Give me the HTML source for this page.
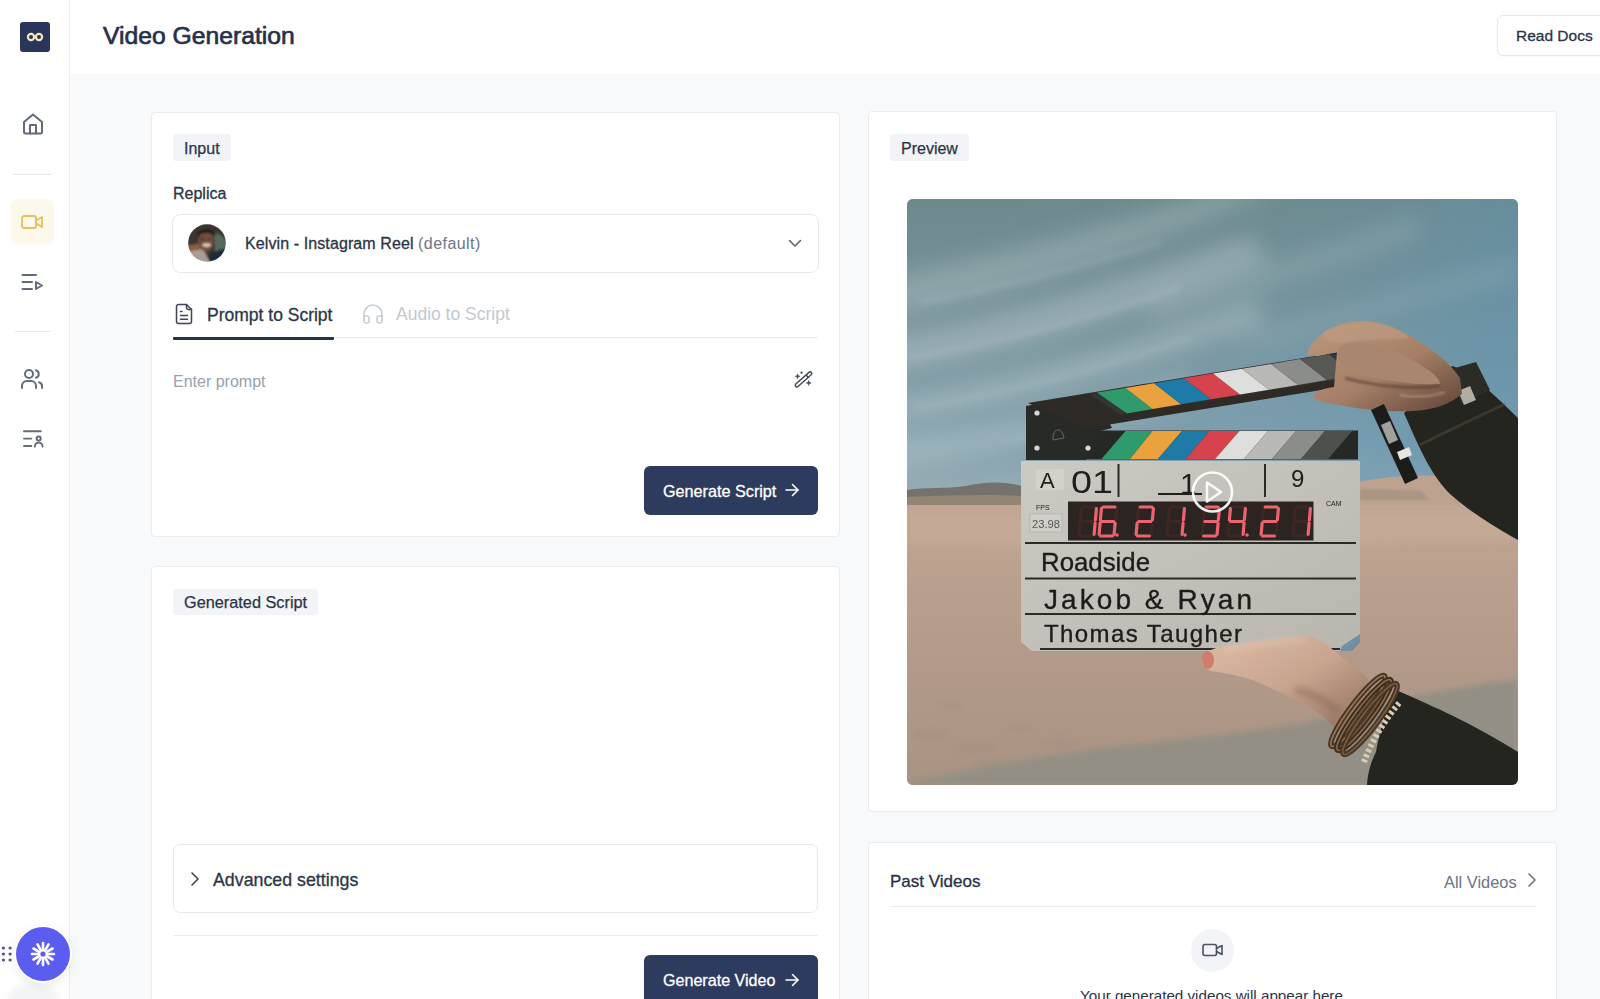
<!DOCTYPE html>
<html><head><meta charset="utf-8">
<style>
*{box-sizing:border-box;margin:0;padding:0}
html,body{width:1600px;height:999px;overflow:hidden;background:#f8f9fb;font-family:"Liberation Sans",sans-serif;color:#273247}
.abs{position:absolute}
svg{position:absolute;overflow:visible}
#side{position:absolute;left:0;top:0;width:70px;height:999px;background:#fff;border-right:1px solid #eceef2}
#hdr{position:absolute;left:70px;top:0;width:1530px;height:74px;background:#fff}
.card{position:absolute;background:#fff;border:1px solid #e9ecf0;border-radius:4px}
.badge{position:absolute;-webkit-text-stroke:0.25px currentColor;background:#f2f4f7;border-radius:3px;font-size:16px;color:#2b3447;height:26px;line-height:27.5px;padding:0 11px;white-space:nowrap}
.txt{position:absolute;white-space:nowrap;line-height:1}
.md{-webkit-text-stroke:0.3px currentColor}
.btn{position:absolute;background:#2d3b5e;border-radius:6px}
.ico{fill:none;stroke-linecap:round;stroke-linejoin:round}
</style></head><body>
<div id="side">
  <div class="abs" style="left:20px;top:22px;width:30px;height:30px;background:#2a355c;border-radius:3px"></div>
  <svg style="left:20px;top:22px" width="30" height="30" viewBox="0 0 30 30">
    <circle cx="11" cy="15" r="3.1" fill="#3a3520" stroke="#ece8c8" stroke-width="2.2"/>
    <circle cx="19" cy="15" r="3.1" fill="#3a3520" stroke="#ece8c8" stroke-width="2.2"/>
  </svg>
  <!-- home -->
  <svg class="ico" style="left:21px;top:112px" width="24" height="24" viewBox="0 0 24 24" stroke="#646b78" stroke-width="2">
    <path d="M3 10 L12 2.5 L21 10 V20 a1.5 1.5 0 0 1 -1.5 1.5 H4.5 A1.5 1.5 0 0 1 3 20 Z"/>
    <path d="M9 21.5 V13 h6 v8.5"/>
  </svg>
  <div class="abs" style="left:13px;top:174px;width:39px;height:1px;background:#e6e8ec"></div>
  <!-- active video -->
  <div class="abs" style="left:11px;top:199px;width:43px;height:45px;background:#fdf8ec;border-radius:6px"></div>
  <svg class="ico" style="left:20px;top:210px" width="24" height="24" viewBox="0 0 24 24" stroke="#e0c45a" stroke-width="1.8">
    <rect x="2" y="6" width="14" height="12" rx="2"/>
    <path d="M16 10.5 L22 7 V17 L16 13.5"/>
  </svg>
  <!-- list video -->
  <svg class="ico" style="left:20px;top:270px" width="24" height="24" viewBox="0 0 24 24" stroke="#646b78" stroke-width="2">
    <path d="M2.5 5 H16"/><path d="M2.5 12 H12"/><path d="M2.5 19 H12"/><path d="M16 12 L22 15.5 L16 19 Z"/>
  </svg>
  <div class="abs" style="left:15px;top:331px;width:36px;height:1px;background:#e6e8ec"></div>
  <!-- users -->
  <svg class="ico" style="left:20px;top:367px" width="24" height="24" viewBox="0 0 24 24" stroke="#646b78" stroke-width="2">
    <circle cx="9" cy="7" r="4"/><path d="M2 21 v-2 a5 5 0 0 1 5 -5 h4 a5 5 0 0 1 5 5 v2"/><path d="M16 3.2 a4 4 0 0 1 0 7.6"/><path d="M22 21 v-2 a4 4 0 0 0 -3 -3.8"/>
  </svg>
  <!-- list user -->
  <svg class="ico" style="left:21px;top:427px" width="24" height="24" viewBox="0 0 24 24" stroke="#646b78" stroke-width="1.9">
    <path d="M3 4.2 H19.8"/><path d="M3 11.6 H10.3"/><path d="M3 19 H10.3"/><circle cx="17.7" cy="11.6" r="2.1"/><path d="M13.8 19.6 C14 16.6 15 15.6 17.7 15.6 C20.4 15.6 21.4 16.6 21.6 19.6"/>
  </svg>
  <!-- bottom widget -->
  <div class="abs" style="left:8px;top:983px;width:50px;height:30px;border-radius:50%;background:#f3f4f6;filter:blur(3px)"></div>
  <div class="abs" style="left:14px;top:925px;width:58px;height:58px;border-radius:50%;background:#fff;box-shadow:0 3px 10px rgba(0,0,0,0.08)"></div>
  <div class="abs" style="left:16px;top:927px;width:54px;height:54px;border-radius:50%;background:#5b5cf0"></div>
  <svg style="left:16px;top:927px" width="54" height="54" viewBox="0 0 54 54">
    <g stroke="#fff" stroke-width="2.6" stroke-linecap="round" transform="translate(27 27)">
      <path d="M0 -4.5 V-11"/><path d="M0 4.5 V11"/><path d="M-4.5 0 H-11"/><path d="M4.5 0 H11"/>
      <g transform="rotate(30)"><path d="M0 -4.5 V-11"/><path d="M0 4.5 V11"/><path d="M-4.5 0 H-11"/><path d="M4.5 0 H11"/></g>
      <g transform="rotate(60)"><path d="M0 -4.5 V-11"/><path d="M0 4.5 V11"/><path d="M-4.5 0 H-11"/><path d="M4.5 0 H11"/></g>
    </g>
    <circle cx="27" cy="27" r="4.2" fill="#fff"/><circle cx="27" cy="27" r="2.6" fill="#5b5cf0"/>
  </svg>
  <svg style="left:0px;top:944px" width="14" height="20" viewBox="0 0 14 20">
    <g fill="#4b4fa8"><circle cx="3.4" cy="4" r="1.6"/><circle cx="10.1" cy="4" r="1.6"/><circle cx="3.4" cy="10" r="1.6"/><circle cx="10.1" cy="10" r="1.6"/><circle cx="3.4" cy="16" r="1.6"/><circle cx="10.1" cy="16" r="1.6"/></g>
  </svg>
</div>
<div id="hdr">
  <div class="txt" style="left:33px;top:24.3px;font-size:24.7px;color:#27304a;-webkit-text-stroke:0.7px #27304a">Video Generation</div>
  <div class="abs" style="left:1427px;top:15px;width:130px;height:41px;border:1px solid #e6e9ee;border-radius:6px;background:#fff;box-shadow:0 1px 2px rgba(0,0,0,0.03)"></div>
  <div class="txt md" style="left:1446px;top:28px;font-size:15.5px;color:#2b3447">Read Docs</div>
</div>

<!-- INPUT CARD -->
<div class="card" style="left:151px;top:112px;width:689px;height:425px"></div>
<div class="badge" style="left:173px;top:134px;height:27px;line-height:29px">Input</div>
<div class="txt md" style="left:173px;top:186px;font-size:16px;color:#2b3447">Replica</div>
<div class="abs" style="left:172px;top:214px;width:647px;height:59px;border:1px solid #e6e9ee;border-radius:8px;background:#fff"></div>
<svg style="left:188px;top:224px" width="38" height="38" viewBox="0 0 38 38">
  <defs><clipPath id="av"><circle cx="19" cy="19" r="18.8"/></clipPath><filter id="avb"><feGaussianBlur stdDeviation="0.9"/></filter></defs>
  <g clip-path="url(#av)"><g filter="url(#avb)">
    <rect x="-2" y="-2" width="42" height="42" fill="#3a3430"/>
    <path d="M26 8 C33 10 40 16 40 24 L40 28 L27 28 Z" fill="#56695c"/>
    <path d="M-2 22 L14 19 L15 26 L-2 30 Z" fill="#8c5c42"/>
    <path d="M-2 28 L15 25 C18 30 20 34 22 40 L-2 40 Z" fill="#aa9d98"/>
    <path d="M21 31 C26 27 34 25 40 24 L40 40 L22 40 Z" fill="#1d2a3a"/>
    <ellipse cx="18" cy="17.5" rx="7.5" ry="10" fill="#76503e"/>
    <path d="M9 12 C9 4 28 3 28 12 C25 8 13 8 9 12 Z" fill="#241c18"/>
    <ellipse cx="18.5" cy="21" rx="4.2" ry="1.8" fill="#e2d2c8"/>
    <path d="M13 15 h3 M20 15 h3" stroke="#2a1c16" stroke-width="1.4"/>
  </g></g>
</svg>
<div class="txt" style="left:245px;top:236.4px;font-size:16px;color:#2b3447"><span class="md" style="letter-spacing:0.1px">Kelvin - Instagram Reel</span> <span style="color:#6e7686;letter-spacing:0.45px">(default)</span></div>
<svg class="ico" style="left:786px;top:234px" width="18" height="18" viewBox="0 0 18 18" stroke="#575d68" stroke-width="1.5">
  <path d="M3.5 6.5 L9 12 L14.5 6.5"/>
</svg>
<!-- tabs -->
<svg class="ico" style="left:173px;top:302px" width="22" height="24" viewBox="0 0 22 24" stroke="#3d4556" stroke-width="1.5">
  <path d="M13.5 2.5 H5.5 a2 2 0 0 0 -2 2 V19.5 a2 2 0 0 0 2 2 H16.5 a2 2 0 0 0 2 -2 V7.5 Z"/>
  <path d="M13.5 2.5 V5.5 a2 2 0 0 0 2 2 H18.5"/><path d="M7.5 9.5 H9"/><path d="M7.5 13.5 H14.5"/><path d="M7.5 17.2 H14.5"/>
</svg>
<div class="txt md" style="left:207px;top:307px;font-size:17.5px;color:#2c3548">Prompt to Script</div>
<svg class="ico" style="left:361px;top:302px" width="24" height="24" viewBox="0 0 24 24" stroke="#c9ced6" stroke-width="1.6">
  <path d="M3 18 V12 a9 9 0 0 1 18 0 V18"/>
  <path d="M21 19 a2 2 0 0 1 -2 2 h-1 a2 2 0 0 1 -2 -2 v-3 a2 2 0 0 1 2 -2 h3 Z"/>
  <path d="M3 19 a2 2 0 0 0 2 2 h1 a2 2 0 0 0 2 -2 v-3 a2 2 0 0 0 -2 -2 H3 Z"/>
</svg>
<div class="txt" style="left:396px;top:306px;font-size:17.5px;color:#c3c8d0">Audio to Script</div>
<div class="abs" style="left:173px;top:337px;width:645px;height:1px;background:#e8ebef"></div>
<div class="abs" style="left:173px;top:337px;width:161px;height:3px;background:#27304a;border-radius:1px"></div>
<div class="txt" style="left:173px;top:374px;font-size:16px;color:#9aa1ad">Enter prompt</div>
<svg style="left:792px;top:368px" width="22" height="22" viewBox="0 0 22 22">
  <path d="M4.9 17.2 L18.1 5.6" stroke="#3f4654" stroke-width="4.7" stroke-linecap="round"/>
  <path d="M4.9 17.2 L18.1 5.6" stroke="#fff" stroke-width="1.9" stroke-linecap="round"/>
  <path d="M14.3 7.2 L16.6 9.8" stroke="#3f4654" stroke-width="1.5"/>
  <path d="M5.6 5.9 Q5.6 8.3 8.0 8.3 Q5.6 8.3 5.6 10.700000000000001 Q5.6 8.3 3.1999999999999997 8.3 Q5.6 8.3 5.6 5.9 Z M16.7 12.6 Q16.7 15 19.099999999999998 15 Q16.7 15 16.7 17.4 Q16.7 15 14.299999999999999 15 Q16.7 15 16.7 12.6 Z" fill="#3f4654" stroke="#3f4654" stroke-width="0.6" stroke-linejoin="round"/>
  <circle cx="9.5" cy="4.7" r="1.1" fill="#3f4654"/>
</svg>
<div class="btn" style="left:644px;top:466px;width:174px;height:49px"></div>
<div class="txt md" style="left:663px;top:483px;font-size:16.2px;color:#fff">Generate Script</div>
<svg class="ico" style="left:783px;top:481px" width="18" height="18" viewBox="0 0 18 18" stroke="#fff" stroke-width="1.6">
  <path d="M3 9 H15"/><path d="M9.5 3.5 L15 9 L9.5 14.5"/>
</svg>

<!-- GENERATED SCRIPT CARD -->
<div class="card" style="left:151px;top:566px;width:689px;height:470px"></div>
<div class="badge" style="left:173px;top:589px;font-size:16.3px">Generated Script</div>
<div class="abs" style="left:173px;top:844px;width:645px;height:69px;border:1px solid #e6e9ee;border-radius:7px;background:#fff"></div>
<svg class="ico" style="left:186px;top:870px" width="18" height="18" viewBox="0 0 18 18" stroke="#3d4556" stroke-width="1.6">
  <path d="M6 3 L12 9 L6 15"/>
</svg>
<div class="txt md" style="left:213px;top:872px;font-size:17.8px;color:#2c3548">Advanced settings</div>
<div class="abs" style="left:173px;top:935px;width:645px;height:1px;background:#e8ebef"></div>
<div class="btn" style="left:644px;top:955px;width:174px;height:60px"></div>
<div class="txt md" style="left:663px;top:972.4px;font-size:16.1px;color:#fff">Generate Video</div>
<svg class="ico" style="left:783px;top:971px" width="18" height="18" viewBox="0 0 18 18" stroke="#fff" stroke-width="1.6">
  <path d="M3 9 H15"/><path d="M9.5 3.5 L15 9 L9.5 14.5"/>
</svg>

<!-- PREVIEW CARD -->
<div class="card" style="left:868px;top:111px;width:689px;height:701px"></div>
<div class="badge" style="left:890px;top:134px;height:27px;line-height:29.5px">Preview</div>
<div id="photo" class="abs" style="left:907px;top:199px;width:611px;height:586px;border-radius:6px;overflow:hidden;background:#8aa6b8">
<svg width="611" height="586" viewBox="907 199 611 586" style="left:0;top:0;position:absolute">
<defs>
  <linearGradient id="sky" x1="0" y1="0" x2="0" y2="1">
    <stop offset="0" stop-color="#6d898c"/>
    <stop offset="0.4" stop-color="#7a959c"/>
    <stop offset="0.75" stop-color="#83a0ad"/>
    <stop offset="1" stop-color="#a2b4b8"/>
  </linearGradient>
  <linearGradient id="skyR" x1="0" y1="0" x2="1" y2="0.3">
    <stop offset="0" stop-color="#8fb0c0" stop-opacity="0"/>
    <stop offset="0.5" stop-color="#6a9ab5" stop-opacity="0.05"/>
    <stop offset="1" stop-color="#5a92b2" stop-opacity="0.45"/>
  </linearGradient>
  <linearGradient id="sand" x1="0" y1="0" x2="0" y2="1">
    <stop offset="0" stop-color="#c1a593"/>
    <stop offset="0.45" stop-color="#b59c8b"/>
    <stop offset="1" stop-color="#a99383"/>
  </linearGradient>
  <linearGradient id="slate" x1="0" y1="0" x2="1" y2="1">
    <stop offset="0" stop-color="#cbcac3"/>
    <stop offset="1" stop-color="#b9b6ae"/>
  </linearGradient>
  <linearGradient id="skin1" x1="0" y1="0" x2="1" y2="1">
    <stop offset="0" stop-color="#c09a7e"/>
    <stop offset="0.55" stop-color="#a47e66"/>
    <stop offset="1" stop-color="#5e4436"/>
  </linearGradient>
  <linearGradient id="skin2" x1="0" y1="0" x2="1" y2="1">
    <stop offset="0" stop-color="#dcbca8"/>
    <stop offset="0.5" stop-color="#c9a58e"/>
    <stop offset="1" stop-color="#8a6a58"/>
  </linearGradient>
  <filter id="bl6" x="-50%" y="-50%" width="200%" height="200%"><feGaussianBlur stdDeviation="5"/></filter>
  <filter id="bl12" x="-50%" y="-50%" width="200%" height="200%"><feGaussianBlur stdDeviation="11"/></filter>
  <filter id="bl3" x="-50%" y="-50%" width="200%" height="200%"><feGaussianBlur stdDeviation="3"/></filter>
  <filter id="bl1" x="-20%" y="-20%" width="140%" height="140%"><feGaussianBlur stdDeviation="1"/></filter>
</defs>
<!-- sky -->
<rect x="907" y="199" width="611" height="320" fill="url(#sky)"/>
<rect x="907" y="199" width="611" height="320" fill="url(#skyR)"/>
<g fill="#c4d0d2" filter="url(#bl12)">
  <path d="M880 280 C1000 255 1100 230 1220 190 L1280 190 C1150 245 1030 285 880 320 Z" opacity="0.3"/>
  <path d="M880 340 C1010 318 1120 282 1250 235 L1270 262 C1140 310 1020 350 880 375 Z" opacity="0.38"/>
  <path d="M880 400 C1010 380 1120 348 1260 298 L1260 325 C1120 372 1010 405 880 425 Z" opacity="0.38"/>
  <path d="M880 440 C1000 428 1090 408 1190 375 L1190 400 C1090 428 1000 452 880 470 Z" opacity="0.4"/>
  <path d="M1150 300 C1230 280 1320 250 1420 215 L1420 235 C1320 270 1230 300 1150 322 Z" opacity="0.22"/>
  <path d="M1240 335 C1330 315 1400 292 1520 258 L1520 276 C1400 308 1330 330 1240 350 Z" opacity="0.18"/>
</g>
<g fill="#d0dadb" filter="url(#bl3)">
  <path d="M920 300 C1000 285 1080 265 1160 240 L1162 244 C1080 270 1000 290 920 305 Z" opacity="0.18"/>
  <path d="M910 355 C990 342 1080 318 1180 285 L1182 290 C1080 324 990 348 910 361 Z" opacity="0.18"/>
  <path d="M915 405 C1000 392 1090 370 1190 335 L1192 340 C1090 376 1000 398 915 411 Z" opacity="0.15"/>
  <path d="M1000 440 C1050 432 1100 420 1150 402 L1152 407 C1100 425 1050 437 1000 446 Z" opacity="0.15"/>
</g>
<!-- mountains -->
<path d="M907 490 C925 487 945 489 965 486 C985 482 1000 481 1022 486 L1022 510 L907 510 Z" fill="#75726e"/>
<path d="M907 497 C950 495 990 494 1022 496 L1022 510 L907 510 Z" fill="#938474"/>
<!-- sand -->
<rect x="907" y="505" width="611" height="280" fill="url(#sand)"/>
<path d="M907 512 H1518 V540 C1300 545 1100 548 907 545 Z" fill="#c9af9c" opacity="0.5" filter="url(#bl6)"/>
<g fill="#9e8e80" opacity="0.35" filter="url(#bl3)">
  <ellipse cx="930" cy="735" rx="18" ry="6"/><ellipse cx="975" cy="748" rx="22" ry="5"/><ellipse cx="1020" cy="728" rx="15" ry="4"/>
  <ellipse cx="950" cy="705" rx="12" ry="4"/><ellipse cx="1060" cy="742" rx="20" ry="5"/><ellipse cx="1000" cy="765" rx="25" ry="6"/>
</g>
<path d="M1358 482 C1380 478 1410 474 1445 476 L1470 505 L1358 505 Z" fill="#bda290"/>
<path d="M1360 490 C1380 487 1400 492 1420 490 L1430 500 L1360 500 Z" fill="#a49080" opacity="0.7" filter="url(#bl1)"/>
<path d="M907 782 C980 768 1060 752 1140 744 C1200 738 1240 732 1300 724 C1380 704 1450 686 1518 680 L1518 785 L907 785 Z" fill="#938f85" filter="url(#bl3)"/>
<!-- ===== clapperboard ===== -->
<path d="M1021 461 H1360 V640 L1350 651 H1032 L1021 642 Z" fill="url(#slate)"/>
<path d="M1342 646 L1360 634 V642 L1352 651 H1340 Z" fill="#5f84a0" opacity="0.8"/>
<rect x="1026" y="430.5" width="332" height="29" fill="#262826"/>
<g>
  <path d="M1101.5 459 L1125.5 431 H1152.5 L1130 459 Z" fill="#2f9a6c"/>
  <path d="M1130 459 L1152.5 431 H1182 L1158 459 Z" fill="#e9a23e"/>
  <path d="M1158 459 L1182 431 H1209.5 L1185.5 459 Z" fill="#1e7aa6"/>
  <path d="M1185.5 459 L1209.5 431 H1239.5 L1215 459 Z" fill="#d6434c"/>
  <path d="M1215 459 L1239.5 431 H1268 L1244 459 Z" fill="#dedfdc"/>
  <path d="M1244 459 L1268 431 H1296 L1272 459 Z" fill="#b9bab6"/>
  <path d="M1272 459 L1296 431 H1325 L1301 459 Z" fill="#8b8d8a"/>
  <path d="M1301 459 L1325 431 H1352 L1328 459 Z" fill="#4e504e"/>
</g>
<path d="M1026 406 L1094 393 L1112 428 L1100 431 L1086 460 H1026 Z" fill="#282a28"/>
<circle cx="1037" cy="413" r="2.6" fill="#d8d8d8"/><circle cx="1037" cy="448" r="2.6" fill="#d8d8d8"/><circle cx="1088" cy="448" r="2.6" fill="#d8d8d8"/>
<path d="M1053 440 C1052 428 1062 426 1064 438 Z" fill="none" stroke="#777" stroke-width="0.8"/>
<!-- top stick -->
<path d="M1028 403 L1352 350 L1352 385 L1085 428.5 Z" fill="#2e2b26"/>
<path d="M1090 394.5 L1352 351 L1352 377 L1120 414.5 Z" fill="#353533"/>
<g>
  <path d="M1097 392.5 L1125.5 388 L1152.5 409 L1127 413.5 Z" fill="#2f9a6c"/>
  <path d="M1125.5 388 L1154 383.3 L1181 404.3 L1152.5 409 Z" fill="#e9a23e"/>
  <path d="M1154 383.3 L1184 378.3 L1211 399.3 L1181 404.3 Z" fill="#1e7aa6"/>
  <path d="M1184 378.3 L1213 373.5 L1240 394.5 L1211 399.3 Z" fill="#d6434c"/>
  <path d="M1213 373.5 L1242 368.7 L1269 389.7 L1240 394.5 Z" fill="#dedfdc"/>
  <path d="M1242 368.7 L1271 363.9 L1298 384.9 L1269 389.7 Z" fill="#b9bab6"/>
  <path d="M1271 363.9 L1300 359.1 L1327 380.1 L1298 384.9 Z" fill="#8b8d8a"/>
  <path d="M1300 359.1 L1329 354.3 L1352 373.5 L1352 376 L1327 380.1 Z" fill="#575856"/>
</g>
<!-- display -->
<rect x="1068" y="501.5" width="245.5" height="39" fill="#2b2421"/>
<g stroke-width="3.2" fill="none" stroke-linecap="round">
<path d="M1083.1 507.0 L1094.9 507.0 M1080.6 536.0 L1092.4 536.0 M1080.1 523.1 L1079.1 534.4 M1081.4 508.6 L1080.4 519.9 M1081.8 521.5 L1093.7 521.5 M1116.4 508.6 L1115.4 519.9 M1152.1 523.1 L1151.1 534.4 M1138.4 508.6 L1137.4 519.9 M1171.1 507.0 L1182.9 507.0 M1168.6 536.0 L1180.4 536.0 M1168.1 523.1 L1167.1 534.4 M1169.4 508.6 L1168.4 519.9 M1169.8 521.5 L1181.7 521.5 M1203.1 523.1 L1202.1 534.4 M1204.4 508.6 L1203.4 519.9 M1232.1 507.0 L1243.9 507.0 M1229.6 536.0 L1241.4 536.0 M1229.1 523.1 L1228.1 534.4 M1277.1 523.1 L1276.1 534.4 M1263.4 508.6 L1262.4 519.9 M1297.1 507.0 L1308.9 507.0 M1294.6 536.0 L1306.4 536.0 M1294.1 523.1 L1293.1 534.4 M1295.4 508.6 L1294.4 519.9 M1295.8 521.5 L1307.7 521.5" stroke="#4a2a28" opacity="0.6"/>
<path d="M1096.4 508.6 L1095.4 519.9 M1095.1 523.1 L1094.1 534.4 M1103.1 507.0 L1114.9 507.0 M1115.1 523.1 L1114.1 534.4 M1100.6 536.0 L1112.4 536.0 M1100.1 523.1 L1099.1 534.4 M1101.4 508.6 L1100.4 519.9 M1101.8 521.5 L1113.7 521.5 M1140.1 507.0 L1151.9 507.0 M1153.4 508.6 L1152.4 519.9 M1137.6 536.0 L1149.4 536.0 M1137.1 523.1 L1136.1 534.4 M1138.8 521.5 L1150.7 521.5 M1184.4 508.6 L1183.4 519.9 M1183.1 523.1 L1182.1 534.4 M1206.1 507.0 L1217.9 507.0 M1219.4 508.6 L1218.4 519.9 M1218.1 523.1 L1217.1 534.4 M1203.6 536.0 L1215.4 536.0 M1204.8 521.5 L1216.7 521.5 M1245.4 508.6 L1244.4 519.9 M1244.1 523.1 L1243.1 534.4 M1230.4 508.6 L1229.4 519.9 M1230.8 521.5 L1242.7 521.5 M1265.1 507.0 L1276.9 507.0 M1278.4 508.6 L1277.4 519.9 M1262.6 536.0 L1274.4 536.0 M1262.1 523.1 L1261.1 534.4 M1263.8 521.5 L1275.7 521.5 M1310.4 508.6 L1309.4 519.9 M1309.1 523.1 L1308.1 534.4" stroke="#ec6470"/>
</g>
<circle cx="1117" cy="535" r="1.8" fill="#ec6470"/><circle cx="1185" cy="535" r="1.8" fill="#ec6470"/><circle cx="1247" cy="535" r="1.8" fill="#ec6470"/>

<g stroke="#2a2a28" stroke-width="2">
  <path d="M1025 543 H1356"/><path d="M1025 578.5 H1356"/><path d="M1025 614 H1356"/><path d="M1040 649 H1340"/>
  <path d="M1118.5 464 V497"/><path d="M1265 464 V497"/>
</g>
<rect x="1036" y="469" width="28" height="21" fill="#d2d1ca"/>
<rect x="1030" y="514" width="32" height="18" fill="#d0cfc8" stroke="#aaa" stroke-width="0.6"/>
<g font-family="Liberation Sans" fill="#1f1f1d">
  <text x="1040" y="488" font-size="22">A</text>
  <text x="1071" y="493" font-size="31" textLength="42" lengthAdjust="spacingAndGlyphs">01</text>
  <text x="1180" y="494" font-size="30">1</text>
  <text x="1291" y="487" font-size="24">9</text>
  <text x="1036" y="510" font-size="7">FPS</text>
  <text x="1032" y="528" font-size="11" fill="#555" textLength="28" lengthAdjust="spacingAndGlyphs">23.98</text>
  <text x="1326" y="506" font-size="7">CAM</text>
</g>
<path d="M1158 494 H1202" stroke="#1f1f1d" stroke-width="2.2"/>
<g font-family="Liberation Sans" fill="#1c1c1a" stroke="#1c1c1a" stroke-width="0.35">
  <text x="1041" y="571" font-size="25" textLength="109" lengthAdjust="spacingAndGlyphs">Roadside</text>
  <text x="1044" y="609" font-size="28" textLength="208" lengthAdjust="spacing">Jakob &amp; Ryan</text>
  <text x="1044" y="642" font-size="24" textLength="198" lengthAdjust="spacing">Thomas Taugher</text>
</g>
<!-- ===== top right sleeve ===== -->
<path d="M1404 413 C1420 400 1440 380 1452 366 C1470 372 1495 395 1518 418 L1518 540 C1500 530 1470 512 1450 494 C1432 476 1420 450 1404 413 Z" fill="#24251f"/>
<path d="M1448 370 L1476 362 L1490 390 L1462 405 Z" fill="#2c2c26"/>
<path d="M1458 391 L1470 386 L1476 400 L1464 405 Z" fill="#c8c4b8" opacity="0.85"/>
<path d="M1420 445 C1445 432 1475 418 1505 404" stroke="#5a4a3a" stroke-width="3" fill="none" opacity="0.5"/>
<!-- hand top -->
<path d="M1307 355 C1310 340 1330 324 1355 321 C1375 319 1392 326 1410 336 C1430 348 1448 360 1460 378 L1462 394 C1450 404 1435 410 1412 411 C1390 412 1365 410 1345 406 C1332 404 1316 402 1313 397 C1314 391 1322 389 1334 387 L1337 352 L1318 356 Z" fill="url(#skin1)"/>
<path d="M1322 334 C1336 325 1356 321 1378 323 C1395 327 1405 333 1410 338 C1390 340 1365 338 1345 342 C1335 344 1326 341 1322 334 Z" fill="#bc9b81" opacity="0.7" filter="url(#bl1)"/>
<path d="M1337 352 C1338 344 1350 341 1366 343 C1386 346 1406 355 1422 366 C1432 372 1440 378 1440 384 C1420 386 1390 381 1366 376 C1350 372 1338 364 1337 352 Z" fill="#a9876e"/>
<path d="M1345 378 C1375 386 1405 390 1440 386" stroke="#4e3a2e" stroke-width="3" fill="none" opacity="0.55" filter="url(#bl1)"/>
<path d="M1400 395 C1415 398 1430 397 1445 392" stroke="#c8a890" stroke-width="3" fill="none" opacity="0.4" filter="url(#bl1)"/>
<!-- marker -->
<path d="M1371 410 L1384 404 L1418 478 L1405 484 Z" fill="#1c1c1a"/>
<path d="M1381 425 L1390 421 L1398 440 L1389 444 Z" fill="#d8d8d4" opacity="0.7"/>
<path d="M1397 452 L1409 447 L1412 455 L1400 460 Z" fill="#e6e6e2"/>
<!-- ===== bottom hand ===== -->
<path d="M1396 690 C1430 705 1470 722 1518 752 L1518 785 H1367 C1368 770 1372 760 1376 752 C1380 730 1388 700 1396 690 Z" fill="#24251f"/>
<path d="M1202 660 C1204 651 1213 648 1226 646 C1255 642 1285 638 1305 635 C1322 637 1342 658 1366 676 C1374 690 1372 714 1357 730 C1346 737 1336 733 1326 718 C1302 702 1280 692 1255 681 C1240 675 1222 673 1212 671 C1205 669 1201 665 1202 660 Z" fill="url(#skin2)"/>
<ellipse cx="1208" cy="660" rx="6" ry="9" fill="#d06a58" opacity="0.75"/>
<path d="M1295 690 C1310 692 1325 700 1338 712" stroke="#7a5a48" stroke-width="6" fill="none" opacity="0.45" filter="url(#bl3)"/>
<path d="M1225 650 C1255 645 1285 640 1305 640" stroke="#e6cdb8" stroke-width="5" fill="none" opacity="0.5" filter="url(#bl3)"/>
<path d="M1364 762 C1370 745 1384 720 1400 702" stroke="#d8ccb6" stroke-width="6" fill="none" stroke-dasharray="3 2.5"/>
<ellipse cx="1364" cy="715" rx="8" ry="42" transform="rotate(37 1364 715)" fill="#6e5444"/>
<g fill="none">
  <ellipse cx="1358" cy="711" rx="8" ry="44" transform="rotate(37 1358 711)" stroke="#4a3624" stroke-width="5.5"/>
  <ellipse cx="1358" cy="711" rx="8" ry="44" transform="rotate(37 1358 711)" stroke="#9a7a56" stroke-width="1.6"/>
  <ellipse cx="1364" cy="715" rx="8" ry="44" transform="rotate(37 1364 715)" stroke="#3e2e20" stroke-width="5.5"/>
  <ellipse cx="1364" cy="715" rx="8" ry="44" transform="rotate(37 1364 715)" stroke="#8a6c4a" stroke-width="1.6"/>
  <ellipse cx="1370" cy="719" rx="8" ry="44" transform="rotate(37 1370 719)" stroke="#4a3624" stroke-width="5.5"/>
  <ellipse cx="1370" cy="719" rx="8" ry="44" transform="rotate(37 1370 719)" stroke="#7a5e40" stroke-width="1.6"/>
</g>
<!-- play button -->
<circle cx="1212.5" cy="492" r="19.5" fill="none" stroke="#fff" stroke-width="2.6" opacity="0.92"/>
<path d="M1207 482.5 L1221 492 L1207 501.5 Z" fill="none" stroke="#fff" stroke-width="2.6" stroke-linejoin="round" opacity="0.92"/>
</svg>















</div>

<!-- PAST VIDEOS -->
<div class="card" style="left:868px;top:842px;width:689px;height:200px"></div>
<div class="txt md" style="left:890px;top:873px;font-size:17px;color:#273247">Past Videos</div>
<div class="txt" style="left:1444px;top:874px;font-size:16.4px;color:#6b7383">All Videos</div>
<svg class="ico" style="left:1523px;top:871px" width="18" height="18" viewBox="0 0 18 18" stroke="#6b7383" stroke-width="1.6">
  <path d="M6 3 L12 9 L6 15"/>
</svg>
<div class="abs" style="left:890px;top:906px;width:646px;height:1px;background:#e8ebef"></div>
<div class="abs" style="left:1191px;top:929px;width:43px;height:43px;border-radius:50%;background:#f3f4f7"></div>
<svg class="ico" style="left:1201px;top:938px" width="24" height="24" viewBox="0 0 24 24" stroke="#4b5363" stroke-width="1.6">
  <rect x="2" y="6.5" width="13.5" height="11" rx="2"/>
  <path d="M15.5 10.5 L21 7.5 V16.5 L15.5 13.5"/>
</svg>
<div class="txt" style="left:1080px;top:988px;font-size:15.2px;color:#2b3447">Your generated videos will appear here</div>
</body></html>
